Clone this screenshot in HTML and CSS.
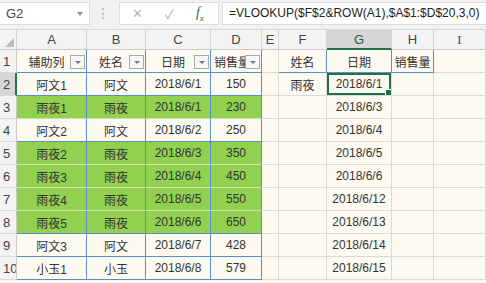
FILE: index.html
```html
<!DOCTYPE html>
<html lang="zh-CN">
<head>
  <meta charset="UTF-8">
  <title>VLOOKUP 一对多查询</title>
  <link rel="stylesheet" href="styles.css">
</head>
<body>
  <div class="fbar">
    <div class="namebox"><span>G2</span><span class="nb-arrow"></span></div>
    <div class="grip"></div>
    <div class="tools">
      <span class="cancel">✕</span>
      <span class="enter">✓</span>
      <span class="fx"><i>f</i><sub>x</sub></span>
    </div>
    <div class="formula">=VLOOKUP($F$2&amp;ROW(A1),$A$1:$D$20,3,0)</div>
  </div>

  <table class="sheet">
    <colgroup>
      <col style="width:17px">
      <col style="width:70px">
      <col style="width:59px">
      <col style="width:65px">
      <col style="width:51px">
      <col style="width:17px">
      <col style="width:48px">
      <col style="width:65px">
      <col style="width:42px">
      <col>
    </colgroup>
    <thead>
      <tr>
        <th class="corner"><span class="tri"></span></th>
        <th>A</th><th>B</th><th>C</th><th>D</th><th>E</th><th>F</th>
        <th class="cur">G</th><th>H</th><th class="serif">I</th>
      </tr>
    </thead>
    <tbody>
      <tr>
        <th class="rh">1</th>
        <td class="tb hd">辅助列<span class="filter"></span></td>
        <td class="tb hd">姓名<span class="filter"></span></td>
        <td class="tb hd">日期<span class="filter"></span></td>
        <td class="tb hd left">销售量<span class="filter"></span></td>
        <td></td>
        <td class="tb">姓名</td>
        <td class="tb">日期</td>
        <td class="tb">销售量</td>
        <td></td>
      </tr>
      <tr>
        <th class="rh cur">2</th>
        <td class="tb">阿文1</td><td class="tb">阿文</td><td class="tb">2018/6/1</td><td class="tb">150</td>
        <td></td><td>雨夜</td><td class="sel">2018/6/1<span class="handle"></span></td><td></td><td></td>
      </tr>
      <tr>
        <th class="rh">3</th>
        <td class="tb g">雨夜1</td><td class="tb g">雨夜</td><td class="tb g">2018/6/1</td><td class="tb g">230</td>
        <td></td><td></td><td>2018/6/3</td><td></td><td></td>
      </tr>
      <tr>
        <th class="rh">4</th>
        <td class="tb">阿文2</td><td class="tb">阿文</td><td class="tb">2018/6/2</td><td class="tb">250</td>
        <td></td><td></td><td>2018/6/4</td><td></td><td></td>
      </tr>
      <tr>
        <th class="rh">5</th>
        <td class="tb g">雨夜2</td><td class="tb g">雨夜</td><td class="tb g">2018/6/3</td><td class="tb g">350</td>
        <td></td><td></td><td>2018/6/5</td><td></td><td></td>
      </tr>
      <tr>
        <th class="rh">6</th>
        <td class="tb g">雨夜3</td><td class="tb g">雨夜</td><td class="tb g">2018/6/4</td><td class="tb g">450</td>
        <td></td><td></td><td>2018/6/6</td><td></td><td></td>
      </tr>
      <tr>
        <th class="rh">7</th>
        <td class="tb g">雨夜4</td><td class="tb g">雨夜</td><td class="tb g">2018/6/5</td><td class="tb g">550</td>
        <td></td><td></td><td>2018/6/12</td><td></td><td></td>
      </tr>
      <tr>
        <th class="rh">8</th>
        <td class="tb g">雨夜5</td><td class="tb g">雨夜</td><td class="tb g">2018/6/6</td><td class="tb g">650</td>
        <td></td><td></td><td>2018/6/13</td><td></td><td></td>
      </tr>
      <tr>
        <th class="rh">9</th>
        <td class="tb">阿文3</td><td class="tb">阿文</td><td class="tb">2018/6/7</td><td class="tb">428</td>
        <td></td><td></td><td>2018/6/14</td><td></td><td></td>
      </tr>
      <tr>
        <th class="rh">10</th>
        <td class="tb">小玉1</td><td class="tb">小玉</td><td class="tb">2018/6/8</td><td class="tb">579</td>
        <td></td><td></td><td>2018/6/15</td><td></td><td></td>
      </tr>
    </tbody>
  </table>
</body>
</html>
```

FILE: styles.css
```css
body {
  margin: 0;
  width: 486px;
  height: 283px;
  overflow: hidden;
  background-color: #fdfaf1;
  font-family: "Liberation Sans", "Noto Sans CJK SC", sans-serif;
  color: #333;
}
.fbar {
  display: flex;
  align-items: stretch;
  height: 30px;
  padding-top: 2px;
  box-sizing: border-box;
  background-color: #f1f1f1;
  border-bottom: 1px solid #d9d9d9;
}
.namebox {
  width: 90px;
  height: 23px;
  box-sizing: border-box;
  background: #fff;
  border: 1px solid #dcdcdc;
  border-left: none;
  display: flex;
  align-items: center;
  justify-content: space-between;
  padding: 0 6px 0 6px;
  font-size: 13px;
  color: #444;
}
.nb-arrow {
  width: 0;
  height: 0;
  border-left: 3px solid transparent;
  border-right: 3px solid transparent;
  border-top: 4px solid #8a8a8a;
}
.grip {
  width: 2px;
  height: 11px;
  margin: 6px 13px 0 12px;
  border-left: 2px dotted #c3c3c3;
}
.tools {
  width: 100px;
  height: 23px;
  box-sizing: border-box;
  background: #fff;
  border: 1px solid #dcdcdc;
  display: flex;
  align-items: center;
  gap: 22px;
  padding-left: 12px;
  color: #b5b5b5;
  font-size: 13px;
}
.tools .fx {
  font-family: "Liberation Serif", serif;
  color: #555;
  font-size: 14px;
}
.tools .fx sub {
  font-size: 9px;
  font-style: italic;
}
.formula {
  flex: 1;
  height: 23px;
  box-sizing: border-box;
  margin-left: 3px;
  background: #fff;
  border: 1px solid #dcdcdc;
  border-right: none;
  padding-left: 6px;
  font-size: 12px;
  line-height: 21px;
  color: #222;
  white-space: nowrap;
  overflow: hidden;
}
.sheet {
  table-layout: fixed;
  width: 486px;
  border-collapse: separate;
  border-spacing: 0;
  font-size: 12px;
}
.sheet th,
.sheet td {
  padding: 0;
  border-right: 1px solid #dadada;
  border-bottom: 1px solid #dadada;
  text-align: center;
  white-space: nowrap;
  overflow: hidden;
}
.sheet thead tr {
  height: 20px;
}
.sheet tbody tr {
  height: 23px;
}
.sheet thead th {
  background-color: #f3f3f3;
  color: #444;
  font-weight: normal;
  font-size: 13px;
  border-right-color: #d4d4d4;
  border-bottom-color: #c9c9c9;
}
.sheet thead th.serif {
  font-family: "Liberation Serif", serif;
}
.sheet thead th.cur {
  background-color: #d6d6d6;
  border-bottom: 2px solid #217346;
  color: #2b5f3b;
}
.corner {
  position: relative;
}
.tri {
  position: absolute;
  right: 2px;
  bottom: 2px;
  width: 0;
  height: 0;
  border-left: 9px solid transparent;
  border-bottom: 9px solid #bdbdbd;
}
.rh {
  background-color: #f3f3f3;
  color: #444;
  font-weight: normal;
  font-size: 13px;
  text-align: left !important;
  padding-left: 3px !important;
  border-right-color: #c9c9c9 !important;
}
.rh.cur {
  background-color: #d6d6d6;
  border-right: 2px solid #217346 !important;
}
.sheet td.tb {
  border-right-color: #5b8fc9;
  border-bottom-color: #5b8fc9;
}
.sheet td.g {
  background-color: #92d050;
  border-bottom-color: #c7e4a8;
}
.sheet tbody tr:nth-child(8) td.g {
  border-bottom-color: #5b8fc9;
}
.hd {
  position: relative;
  padding-right: 10px !important;
}
.hd.left {
  text-align: left !important;
  padding-left: 3px !important;
}
.filter {
  position: absolute;
  right: 1px;
  top: 5px;
  width: 15px;
  height: 14px;
  box-sizing: border-box;
  background: #f7f7f7;
  border: 1px solid #a9a9a9;
}
.filter::after {
  content: "";
  position: absolute;
  left: 4px;
  top: 5px;
  border-left: 3px solid transparent;
  border-right: 3px solid transparent;
  border-top: 3px solid #6a7d91;
}
.sel {
  position: relative;
  box-shadow: inset 0 0 0 2px #217346;
}
.handle {
  position: absolute;
  right: -1px;
  bottom: -1px;
  width: 5px;
  height: 5px;
  background: #217346;
  border: 1px solid #fff;
}
```
